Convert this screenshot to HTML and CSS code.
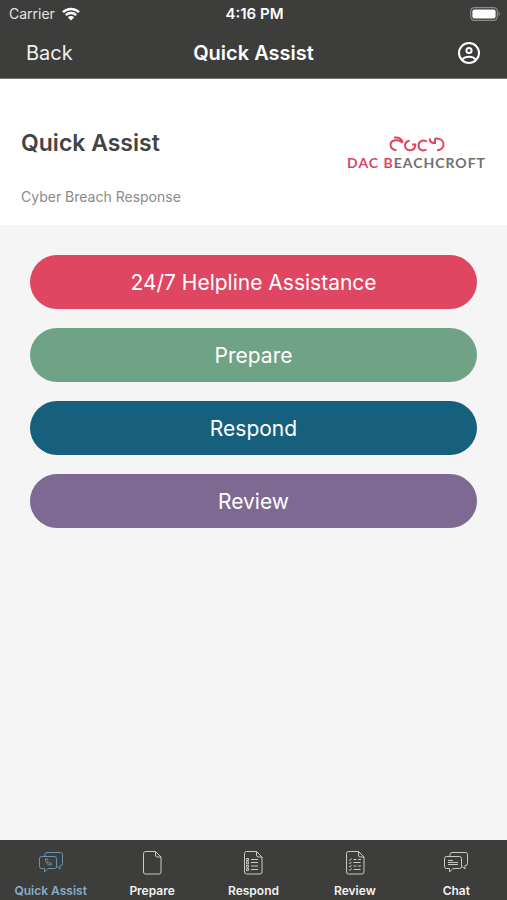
FILE: index.html
```html
<!DOCTYPE html>
<html lang="en">
<head>
  <meta charset="UTF-8">
  <meta name="viewport" content="width=device-width, initial-scale=1">
  <title>Quick Assist</title>
  <link rel="stylesheet" href="styles.css">
</head>
<body>
  <header class="top">
    <!-- status bar -->
    <div class="status">
      <div class="carrier">
        <span>Carrier</span>
        <svg class="wifi" viewBox="0 0 18 14" width="18" height="14">
          <path d="M1 5.2a11.5 11.5 0 0 1 16 0M3.8 8.2a7.4 7.4 0 0 1 10.4 0" fill="none" stroke="#fff" stroke-width="2.4"/>
          <path d="M9 13.6L5.8 10.3a4.6 4.6 0 0 1 6.4 0z" fill="#fff"/>
        </svg>
      </div>
      <span class="time">4:16 PM</span>
      <svg class="battery" viewBox="0 0 30 14" width="30" height="14">
        <rect x=".7" y=".7" width="26.6" height="12.6" rx="3.6" fill="none" stroke="#8c8c8b" stroke-width="1.2"/>
        <rect x="2.4" y="2.4" width="23.2" height="9.2" rx="2" fill="#fff"/>
        <path d="M28.6 4.8q1.3.6 1.3 2.2t-1.3 2.2z" fill="#8c8c8b"/>
      </svg>
    </div>

    <!-- navigation bar -->
    <div class="nav">
      <a class="back" href="#">Back</a>
      <span class="nav-title">Quick Assist</span>
      <button class="account" type="button" aria-label="Account">
        <svg viewBox="0 0 24 24" width="24" height="24" fill="none" stroke="#fff" stroke-width="2">
          <circle cx="12" cy="12" r="10"/>
          <circle cx="12" cy="9.5" r="2.6"/>
          <path d="M5.2 18.4c1.8-1.800 4.200-2.600 6.800-2.600s5 .8 6.800 2.600"/>
        </svg>
      </button>
    </div>
  </header>

  <section class="intro">
    <div>
      <h1>Quick Assist</h1>
      <p>Cyber Breach Response</p>
    </div>
    <div class="logo">
      <svg viewBox="0 0 56 16" width="56" height="16" fill="none" stroke="#dd4661" stroke-width="2">
        <path d="M7.500 14.200C3.500 13.800 1.500 11.500 1.500 8.800C1.500 5.500 4.500 4 8 4.300C10.500 4.600 12.500 5 13.500 7M5 1.500C10 1 13.500 3 13.500 7"/>
        <path d="M20.500 4.500C17.500 5.500 16 7.500 16 9.500C16 12.500 18.300 14.300 21 14.300C24 14.300 26.300 12.500 26.300 8.500H23"/>
        <path d="M38 5.500C33.500 3 29.500 5.800 29.500 9.500C29.500 13.500 33.500 15.800 37.500 13.500"/>
        <path d="M40.500 2.500C41 6 42.500 7.300 46 7V2.500M46 2.500C51.500 2 54.500 4.500 54.500 8.300C54.500 11.500 52 14.200 48 14.200"/>
      </svg>
      <span class="logo-text"><b>DAC B</b>EACHCROFT</span>
    </div>
  </section>

  <main class="actions">
    <button class="btn helpline" type="button">24/7 Helpline Assistance</button>
    <button class="btn prepare" type="button">Prepare</button>
    <button class="btn respond" type="button">Respond</button>
    <button class="btn review" type="button">Review</button>
  </main>

  <nav class="tabs">
    <a class="tab active" href="#">
      <svg viewBox="0 0 26 26" width="26" height="26">
        <path d="M7 6V4.500Q7 2.500 9 2.500h13.500Q24.500 2.500 24.500 4.500v9q0 2-2 2H22v3.500l-3.500-3"/>
        <path d="M3.500 6.500h13q2 0 2 2v8q0 2-2 2H10L6.500 22v-3.500h-3q-2 0-2-2v-8q0-2 2-2z"/>
        <path d="M7.500 9c-.8 3 2.500 6.500 5.500 6l.5-1.500-2-1-1 .7q-1-.8-1.200-1.700l.8-.8-.8-1.900z"/>
      </svg>
      <span>Quick Assist</span>
    </a>
    <a class="tab" href="#">
      <svg viewBox="0 0 26 26" width="26" height="26">
        <path d="M6.500 1.500h10l5.500 5.500v15q0 2-2 2H6.500q-2 0-2-2v-18.500q0-2 2-2zM16.500 1.500V5q0 2 2 2H22"/>
      </svg>
      <span>Prepare</span>
    </a>
    <a class="tab" href="#">
      <svg viewBox="0 0 26 26" width="26" height="26">
        <path d="M6.500 1.500h10l5.500 5.500v15q0 2-2 2H6.500q-2 0-2-2v-18.500q0-2 2-2zM16.500 1.500V5q0 2 2 2H22"/>
        <path d="M11 9.500h7M11 12.500h7M11 16h7M11 19.500h7"/>
        <path d="M6.500 8.500h2v2h-2zM6.500 11.800h2v2h-2zM6.500 15.200h2v2h-2zM6.500 18.500h2v2h-2z"/>
      </svg>
      <span>Respond</span>
    </a>
    <a class="tab" href="#">
      <svg viewBox="0 0 26 26" width="26" height="26">
        <path d="M6.500 1.500h10l5.500 5.500v15q0 2-2 2H6.500q-2 0-2-2v-18.500q0-2 2-2zM16.500 1.500V5q0 2 2 2H22"/>
        <path d="M11.500 9.500h3M16 9.500h3M11.500 12.500h7M11.500 16h3M16 16h3M11.500 19.500h7"/>
        <path d="M7 9.500l1 1 1.500-2M7 12.800l1 1 1.500-2M7 16.200l1 1 1.500-2M7 19.500l1 1 1.500-2"/>
      </svg>
      <span>Review</span>
    </a>
    <a class="tab" href="#">
      <svg viewBox="0 0 26 26" width="26" height="26">
        <path d="M7 6V4.500Q7 2.500 9 2.500h13.500Q24.500 2.500 24.500 4.500v9q0 2-2 2H22v3.500l-3.500-3"/>
        <path d="M3.500 6.500h13q2 0 2 2v8q0 2-2 2H10L6.500 22v-3.500h-3q-2 0-2-2v-8q0-2 2-2z"/>
        <path d="M5 10.500h5M5 12.500h10M5 14.500h10"/>
      </svg>
      <span>Chat</span>
    </a>
  </nav>
</body>
</html>
```
FILE: styles.css
```css
*{box-sizing: border-box;}
body,h1,p{margin:0;}
a{color: inherit;text-decoration: none;}
button{border: none;padding: 0;font: inherit;color: inherit;cursor: pointer;}
svg{display: block;}

body{
  display: flex;
  flex-direction: column;
  min-height: 100vh;
  background-color: #f5f5f5;
  font-family: Inter,"Liberation Sans",sans-serif;
}

.top{
  background-color: #3d3d3b;
  color: #fff;
  border-bottom: 1px solid #777775;
}
.status,.nav{
  display: grid;
  grid-template-columns: 1fr auto 1fr;
  align-items: center;
}
.status{
  height: 27px;
  padding: 0 7px 0 9px;
  font-size: 15px;
}
.carrier{
  display: flex;
  align-items: center;
  gap: 7px;
  font-size: 14px;
  color: #e4e4e3;
}
.time{font-weight: 600;}
.battery{justify-self: end;}
.nav{
  height: 51px;
  padding: 0 26px;
  font-size: 20px;
}
.back{justify-self: start;color: #f0f0ef;}
.nav-title{font-weight: 600;}
.account{
  justify-self: end;
  background: none;
}

.intro{
  display: flex;
  justify-content: space-between;
  padding: 48px 21px 18px;
  background-color: #fff;
}
.intro h1{
  font-size: 23px;
  line-height: 32px;
  font-weight: 600;
  color: #444;
}
.intro p{
  margin-top: 28px;
  font-size: 14px;
  line-height: 20px;
  color: #8a8a8a;
}
.logo{
  display: flex;
  flex-direction: column;
  align-items: center;
  gap: 3px;
  padding-top: 9px;
}
.logo-text{
  font-family: Lato,sans-serif;
  font-size: 14px;
  line-height: 16px;
  font-weight: 700;
  letter-spacing: 1px;
  color: #6f7072;
}
.logo-text b{font-weight: 700;color: #dd4661;}

.actions{
  flex: 1;
  display: flex;
  flex-direction: column;
  gap: 19px;
  padding: 30px;
}
.btn{
  height: 54px;
  border-radius: 27px;
  font-size: 21px;
  color: #fff;
}
.helpline{background-color: #df4661;}
.prepare{background-color: #70a386;}
.respond{background-color: #165f7d;}
.review{background-color: #7d6991;}

.tabs{
  display: grid;
  grid-template-columns: repeat(5,1fr);
  height: 60px;
  background-color: #3d3d3b;
}
.tab{
  display: flex;
  flex-direction: column;
  align-items: center;
  gap: 6px;
  padding-top: 10px;
  font-size: 12px;
  line-height: 18px;
  font-weight: 600;
  color: #f2f2f1;
}
.tab svg{
  fill: none;
  stroke: #c9c9c8;
  stroke-width: 1;
}
.tab.active{color: #86aecb;}
.tab.active svg{stroke: #6d93b0;}
```
